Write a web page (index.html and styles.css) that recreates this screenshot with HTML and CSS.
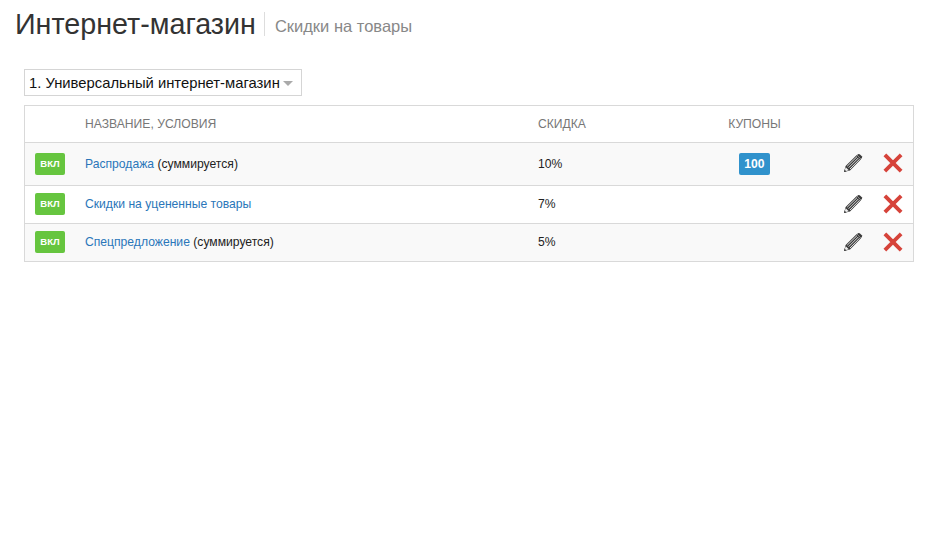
FILE: index.html
```html
<!DOCTYPE html>
<html lang="ru">
<head>
<meta charset="utf-8">
<title>Скидки на товары</title>
<link rel="stylesheet" href="styles.css">
</head>
<body>
<header class="page-head">
  <h1 class="title">Интернет-магазин</h1>
  <span class="subtitle">Скидки на товары</span>
</header>
<main class="content">
  <button class="select" type="button">1. Универсальный интернет-магазин<span class="caret"></span></button>
  <table class="grid">
    <colgroup>
      <col class="c-status"><col class="c-name"><col class="c-disc"><col class="c-coupon"><col class="c-edit"><col class="c-del">
    </colgroup>
    <thead>
      <tr><th></th><th>НАЗВАНИЕ, УСЛОВИЯ</th><th>СКИДКА</th><th class="center">КУПОНЫ</th><th></th><th></th></tr>
    </thead>
    <tbody>
      <tr class="tall">
        <td class="status"><span class="on">ВКЛ</span></td>
        <td><a href="#">Распродажа</a> (суммируется)</td>
        <td>10%</td>
        <td class="center"><span class="count">100</span></td>
        <td class="act edit"><svg class="ico" viewBox="0 0 20 20"><use href="#pencil"/></svg></td>
        <td class="act del"><svg class="ico" viewBox="0 0 20 20"><use href="#cross"/></svg></td>
      </tr>
      <tr class="plain">
        <td class="status"><span class="on">ВКЛ</span></td>
        <td><a href="#">Скидки на уцененные товары</a></td>
        <td>7%</td>
        <td></td>
        <td class="act edit"><svg class="ico" viewBox="0 0 20 20"><use href="#pencil"/></svg></td>
        <td class="act del"><svg class="ico" viewBox="0 0 20 20"><use href="#cross"/></svg></td>
      </tr>
      <tr class="last">
        <td class="status"><span class="on">ВКЛ</span></td>
        <td><a href="#">Спецпредложение</a> (суммируется)</td>
        <td>5%</td>
        <td></td>
        <td class="act edit"><svg class="ico" viewBox="0 0 20 20"><use href="#pencil"/></svg></td>
        <td class="act del"><svg class="ico" viewBox="0 0 20 20"><use href="#cross"/></svg></td>
      </tr>
    </tbody>
  </table>
</main>
<svg class="defs" width="0" height="0">
  <defs>
    <g id="pencil">
      <path d="M1 19 L2.6 13 L13.8 2 L18 6.2 L7 17.4 Z" fill="#3a3a3a"/>
      <path d="M15 1.2 Q16 .6 17 1.4 L18.8 3.2 Q19.4 4.2 18.8 5 L18 5.9 L14.1 1.9 Z" fill="#3a3a3a"/>
      <path d="M4.2 13.2 L14 3.6 M5.6 14.7 L15.4 4.9 M7 16 L16.6 6.2" stroke="#f4f4f4" stroke-width=".9"/>
      <path d="M2.7 14.2 L5.8 17.3 L1.4 18.6 Z" fill="#f0f0f0"/>
      <path d="M1 19 L1.6 16.6 L3.4 18.4 Z" fill="#3a3a3a"/>
    </g>
    <g id="cross">
      <path d="M3.2 3.2 L16.8 16.8 M16.8 3.2 L3.2 16.8" stroke="#d6433a" stroke-width="3.8" stroke-linecap="square"/>
    </g>
  </defs>
</svg>
</body>
</html>
```
FILE: styles.css
```css
* { box-sizing: border-box; }
html, body { margin: 0; background: #fff; }
body {
  font-family: "Liberation Sans", Arial, sans-serif;
  font-size: 12px;
  color: #333;
  padding: 0 20px 0 24px;
}
.page-head {
  display: flex;
  align-items: center;
  height: 38px;
  margin: 5px 0 26px -9px;
}
.title {
  margin: 0;
  font-size: 28.7px;
  font-weight: 400;
  line-height: 38px;
  color: #333;
  padding-right: 8px;
}
.subtitle {
  font-size: 16.5px;
  color: #888;
  border-left: 1px solid #ddd;
  padding-left: 10px;
  height: 24px;
  line-height: 28px;
}
.select {
  display: flex;
  align-items: center;
  width: 278px;
  height: 27px;
  margin: 0 0 9px;
  padding: 1px 0 0 4px;
  background: #fff;
  border: 1px solid #d5d5d5;
  font: 14.8px "Liberation Sans", Arial, sans-serif;
  color: #111;
}
.caret {
  margin-left: 3px;
  border-style: solid;
  border-width: 5px 5px 0;
  border-color: #aaa transparent transparent;
}
.grid {
  width: 890px;
  border-collapse: separate;
  border-spacing: 0;
  table-layout: fixed;
  border: 1px solid #d9d9d9;
}
.c-status { width: 60px; }
.c-name { width: 453px; }
.c-disc { width: 160px; }
.c-coupon { width: 113px; }
.c-edit { width: 62px; }
.c-del { width: 40px; }
th {
  height: 37px;
  padding: 0;
  text-align: left;
  font-weight: 400;
  font-size: 12.15px;
  color: #777;
  border-bottom: 1px solid #d9d9d9;
}
td {
  height: 38px;
  padding: 0 0 2px;
  font-size: 12.15px;
  color: #222;
  border-bottom: 1px solid #d9d9d9;
  background: #f9f9f9;
}
tr.tall td { height: 43px; padding-bottom: 0; }
tr.plain td { background: #fff; }
tr.last td { height: 37px; border-bottom: 0; }
.center { text-align: center; }
td.status { padding-left: 10px; }
a { color: #2a76b9; text-decoration: none; }
.on {
  display: block;
  width: 30px;
  height: 22px;
  line-height: 22px;
  text-align: center;
  font-size: 9.5px;
  font-weight: 700;
  color: #fff;
  background: #66c53f;
  border-radius: 2px;
}
.count {
  display: inline-block;
  width: 31px;
  height: 22px;
  line-height: 22px;
  font-weight: 700;
  color: #fff;
  background: #3092cc;
  border-radius: 2px;
}
.act { line-height: 0; }
tr td.edit { text-align: right; padding-right: 10px; padding-bottom: 2px; }
tr td.del { text-align: left; padding-left: 10px; padding-bottom: 2px; }
.ico { width: 20px; height: 20px; }
.defs { position: absolute; }
```
